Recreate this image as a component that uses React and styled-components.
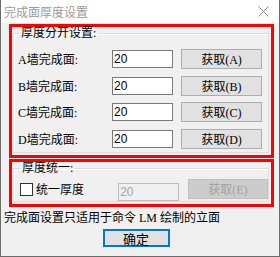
import React from "react";
import styled, { createGlobalStyle } from "styled-components";

const Global = createGlobalStyle`
	html, body {
		margin: 0;
		padding: 0;
		background: #ffffff;
	}
	* {
		box-sizing: border-box;
	}
`;

const cjk = `"Liberation Serif", "Noto Sans CJK SC", serif`;

const Window = styled.div`
	width: 280px;
	height: 257px;
	background: #f0f0f0;
	border: 1px solid #6b6b6b;
	border-top: none;
	display: flex;
	flex-direction: column;
	font-family: ${cjk};
	font-size: 12px;
	color: #000;
	overflow: hidden;
`;

const TitleBar = styled.div`
	height: 23px;
	background: #ffffff;
	display: flex;
	align-items: center;
	justify-content: space-between;
	padding: 0 10px 0 3px;
	color: #9a9a9a;
	font-size: 12px;
	flex-shrink: 0;
`;

const Body = styled.div`
	display: flex;
	flex-direction: column;
	padding: 1px 5px 0 8px;
`;

const RedBox = styled.div`
	border: 3px solid #ff0000;
	height: ${(p) => p.$h}px;
	margin-top: ${(p) => p.$mt || 0}px;
	padding: 0 2px 2px 1px;
	display: flex;
	flex-shrink: 0;
`;

const Group = styled.fieldset`
	flex: 1;
	margin: 0;
	border: 1px solid #dcdcdc;
	box-shadow: inset 1px 1px 0 #ffffff;
	padding: ${(p) => p.$pad};
	display: flex;
	flex-direction: column;
	min-width: 0;
`;

const Legend = styled.legend`
	padding: 0 2px;
	margin-left: 1px;
	font-size: 12px;
	line-height: 13px;
`;

const Row = styled.div`
	display: flex;
	align-items: center;
	height: 27px;
`;

const Label = styled.span`
	width: ${(p) => p.$w}px;
	white-space: nowrap;
`;

const Input = styled.div`
	width: 61px;
	height: 18px;
	border: 1px solid ${(p) => (p.$disabled ? "#bcbcbc" : "#7a7a7a")};
	background: ${(p) => (p.$disabled ? "#f0f0f0" : "#ffffff")};
	color: ${(p) => (p.$disabled ? "#a3a3a3" : "#000")};
	display: flex;
	align-items: center;
	padding-left: 1px;
	font-family: "Liberation Sans", Arial, sans-serif;
	font-size: 12px;
	margin-top: ${(p) => p.$mt || 0}px;
`;

const Button = styled.div`
	width: 81px;
	height: 20px;
	margin-left: ${(p) => p.$ml}px;
	border: 1px solid ${(p) => (p.$disabled ? "#bfbfbf" : "#adadad")};
	background: ${(p) => (p.$disabled ? "#cccccc" : "#e1e1e1")};
	color: ${(p) => (p.$disabled ? "#a0a0a0" : "#000")};
	display: flex;
	align-items: center;
	justify-content: center;
	font-size: 12px;
	margin-top: ${(p) => p.$mt || 0}px;
`;

const Check = styled.span`
	width: 13px;
	height: 13px;
	border: 1px solid #333333;
	background: #ffffff;
	margin: 0 3px 0 1px;
`;

const Note = styled.div`
	margin: 4px 0 0 -5px;
	height: 14px;
	line-height: 14px;
	white-space: nowrap;
`;

const Footer = styled.div`
	display: flex;
	justify-content: center;
	margin-top: 4px;
`;

const OkButton = styled.div`
	width: 67px;
	height: 18px;
	border: 2px solid #0078d7;
	background: #e1e1e1;
	display: flex;
	align-items: center;
	justify-content: center;
	font-size: 13px;
	margin-left: -11px;
`;

const walls = ["A", "B", "C", "D"];

export default function App() {
	return (
		<>
			<Global />
			<Window>
				<TitleBar>
					<span>完成面厚度设置</span>
					<svg width="11" height="11" viewBox="0 0 11 11">
						<path d="M0.5 0.5 L10.5 10.5 M10.5 0.5 L0.5 10.5" stroke="#8a8a8a" strokeWidth="1" />
					</svg>
				</TitleBar>
				<Body>
					<RedBox $h={134}>
						<Group $pad="6px 0 0 4px">
							<Legend>厚度分开设置:</Legend>
							{walls.map((w) => (
								<Row key={w}>
									<Label $w={94}>{w}墙完成面:</Label>
									<Input>20</Input>
									<Button $ml={8}>获取({w})</Button>
								</Row>
							))}
						</Group>
					</RedBox>
					<RedBox $h={48} $mt={1}>
						<Group $pad="2px 0 0 5px">
							<Legend>厚度统一:</Legend>
							<Row>
								<Check />
								<Label $w={83}>统一厚度</Label>
								<Input $disabled $mt={6}>20</Input>
								<Button $disabled $ml={9} $mt={-1}>获取(E)</Button>
							</Row>
						</Group>
					</RedBox>
					<Note>完成面设置只适用于命令 LM 绘制的立面</Note>
					<Footer>
						<OkButton>确定</OkButton>
					</Footer>
				</Body>
			</Window>
		</>
	);
}
